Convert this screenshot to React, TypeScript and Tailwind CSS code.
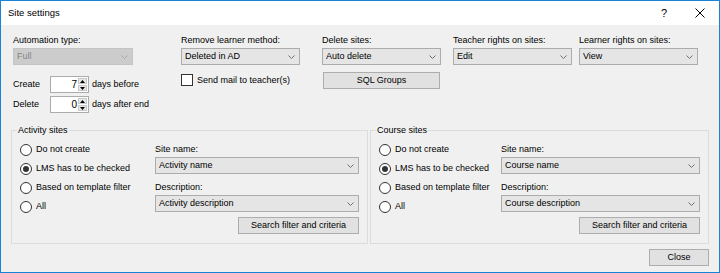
import type { ReactNode } from 'react';

const FONT = "font-['Liberation_Sans',Arial,sans-serif]";

function Chevron({ muted }: { muted?: boolean }) {
  return (
    <svg width="7" height="4" viewBox="0 0 7 4" className="shrink-0">
      <polyline
        points="0.5,0.5 3.5,3.5 6.5,0.5"
        fill="none"
        stroke={muted ? '#a8a8a8' : '#707070'}
        strokeWidth="1"
      />
    </svg>
  );
}

function Select({
  value,
  width,
  disabled,
}: {
  value: string;
  width: string;
  disabled?: boolean;
}) {
  return (
    <div
      className={`${width} h-[17px] flex items-center pl-[3px] pr-[4px] border ${
        disabled
          ? 'bg-[#cccccc] border-[#c4c4c4] text-[#858585]'
          : 'bg-[#e5e5e5] border-[#acacac] text-black'
      }`}
    >
      <span className="flex-1 truncate leading-none">{value}</span>
      <Chevron muted={disabled} />
    </div>
  );
}

function Button({ children, className }: { children: ReactNode; className: string }) {
  return (
    <button
      type="button"
      className={`${className} h-[17px] bg-[#e1e1e1] border border-[#adadad] flex items-center justify-center leading-none`}
    >
      {children}
    </button>
  );
}

function Spinner({ value }: { value: number }) {
  return (
    <div className="w-[39px] h-[17px] shrink-0 bg-white border border-[#acacac] flex items-stretch">
      <span className="flex-1 flex items-center justify-end pr-[1px] text-[10px] leading-none">
        {value}
      </span>
      <div className="w-[9px] flex flex-col my-[1px] mr-[1px] gap-[1px]">
        <div className="flex-1 bg-[#e8e8e8] border border-[#c8c8c8] flex items-center justify-center">
          <svg width="5" height="3" viewBox="0 0 5 3">
            <polygon points="2.5,0 5,3 0,3" fill="#000" />
          </svg>
        </div>
        <div className="flex-1 bg-[#e8e8e8] border border-[#c8c8c8] flex items-center justify-center">
          <svg width="5" height="3" viewBox="0 0 5 3">
            <polygon points="0,0 5,0 2.5,3" fill="#000" />
          </svg>
        </div>
      </div>
    </div>
  );
}

function Radio({ label, checked }: { label: string; checked?: boolean }) {
  return (
    <div className="h-[19px] flex items-center whitespace-nowrap">
      <span className="w-[12px] h-[12px] shrink-0 rounded-full border border-[#333333] bg-white flex items-center justify-center">
        {checked && <span className="w-[6px] h-[6px] rounded-full bg-[#333333]" />}
      </span>
      <span className="ml-[4px] leading-none">{label}</span>
    </div>
  );
}

function Field({ label, children }: { label: string; children: ReactNode }) {
  return (
    <div className="flex flex-col">
      <span className="h-[12px] leading-[12px] mb-[2px] whitespace-nowrap">{label}</span>
      {children}
    </div>
  );
}

function SitesGroup({
  title,
  width,
  selectWidth,
  name,
  description,
}: {
  title: string;
  width: string;
  selectWidth: string;
  name: string;
  description: string;
}) {
  return (
    <div className={`relative ${width} h-[114px] border border-[#dcdcdc] flex pl-[8px] pr-[8px]`}>
      <span className="absolute -top-[7px] left-[5px] px-[1px] bg-[#f0f0f0] leading-[12px]">
        {title}
      </span>
      <div className="flex flex-col pt-[9px] flex-1">
        <Radio label="Do not create" />
        <Radio label="LMS has to be checked" checked />
        <Radio label="Based on template filter" />
        <Radio label="All" />
      </div>
      <div className="flex flex-col items-end pt-[12px]">
        <div className="flex flex-col">
          <span className="h-[12px] leading-[12px] mb-[2px]">Site name:</span>
          <Select value={name} width={selectWidth} />
          <span className="h-[12px] leading-[12px] mt-[7px] mb-[2px]">Description:</span>
          <Select value={description} width={selectWidth} />
        </div>
        <Button className="w-[121px] mt-[5px]">Search filter and criteria</Button>
      </div>
    </div>
  );
}

export default function App() {
  return (
    <div
      className={`${FONT} w-[720px] h-[273px] border border-[#1883d7] bg-[#f0f0f0] text-[9px] text-black flex flex-col overflow-hidden`}
    >
      <div className="h-[24px] shrink-0 bg-white flex items-center pl-[7px] text-[9.5px]">
        <span>Site settings</span>
        <span className="ml-auto text-[11px]">?</span>
        <svg width="10" height="10" viewBox="0 0 10 10" className="ml-[28px] mr-[14px]">
          <path d="M0.5 0.5 L9.5 9.5 M9.5 0.5 L0.5 9.5" stroke="#000" strokeWidth="1" />
        </svg>
      </div>

      <div className="flex pt-[9px] pl-[12px] h-[98px] shrink-0">
        <div className="flex flex-col w-[120px] shrink-0">
          <Field label="Automation type:">
            <Select value="Full" width="w-[120px]" disabled />
          </Field>
          <div className="flex items-center mt-[11px] whitespace-nowrap">
            <span className="w-[37px] shrink-0">Create</span>
            <Spinner value={7} />
            <span className="ml-[3px]">days before</span>
          </div>
          <div className="flex items-center mt-[3px] whitespace-nowrap">
            <span className="w-[37px] shrink-0">Delete</span>
            <Spinner value={0} />
            <span className="ml-[3px]">days after end</span>
          </div>
        </div>

        <div className="flex flex-col w-[119px] shrink-0 ml-[48px]">
          <Field label="Remove learner method:">
            <Select value="Deleted in AD" width="w-[119px]" />
          </Field>
          <label className="flex items-center mt-[9px] whitespace-nowrap">
            <span className="w-[12px] h-[12px] shrink-0 border border-[#333333] bg-white" />
            <span className="ml-[4px] leading-none">Send mail to teacher(s)</span>
          </label>
        </div>

        <div className="flex flex-col w-[119px] shrink-0 ml-[22px]">
          <Field label="Delete sites:">
            <Select value="Auto delete" width="w-[119px]" />
          </Field>
          <Button className="w-[117px] ml-[1px] mt-[7px]">SQL Groups</Button>
        </div>

        <div className="flex flex-col w-[119px] shrink-0 ml-[12px]">
          <Field label="Teacher rights on sites:">
            <Select value="Edit" width="w-[119px]" />
          </Field>
        </div>

        <div className="flex flex-col w-[119px] shrink-0 ml-[7px]">
          <Field label="Learner rights on sites:">
            <Select value="View" width="w-[119px]" />
          </Field>
        </div>
      </div>

      <div className="flex pl-[10px] mt-[7px] gap-[2px]">
        <SitesGroup
          title="Activity sites"
          width="w-[357px]"
          selectWidth="w-[204px]"
          name="Activity name"
          description="Activity description"
        />
        <SitesGroup
          title="Course sites"
          width="w-[339px]"
          selectWidth="w-[199px]"
          name="Course name"
          description="Course description"
        />
      </div>

      <div className="flex justify-end pr-[10px] mt-[5px]">
        <Button className="w-[60px]">Close</Button>
      </div>
    </div>
  );
}
